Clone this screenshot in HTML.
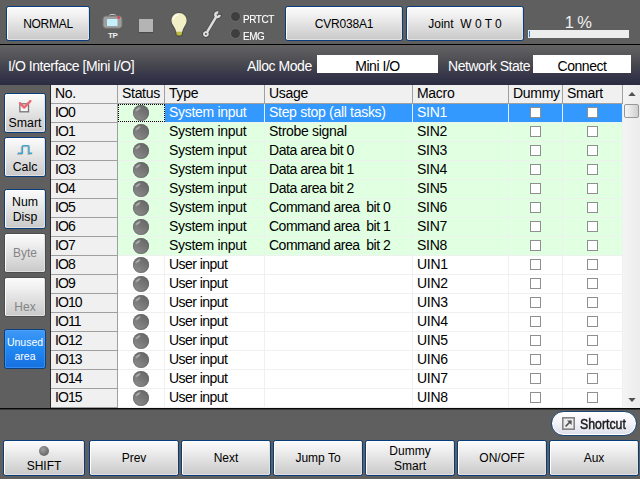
<!DOCTYPE html>
<html><head><meta charset="utf-8"><title>I/O Interface</title>
<style>
*{box-sizing:border-box;margin:0;padding:0}
html,body{width:640px;height:479px;overflow:hidden;background:#5f5f5f;font-family:"Liberation Sans",sans-serif;font-size:14px;letter-spacing:-0.3px;color:#000}
.abs{position:absolute}
.btn{position:absolute;border:1px solid #083d7c;border-radius:2.5px;background:linear-gradient(#fbfbfb 0%,#efefef 28%,#dedede 60%,#c9c9c9 100%);box-shadow:inset 1px 1px 0 0 #fff,inset -1px -1px 0 0 #e2e0de;text-align:center;color:#000;font-size:12px;letter-spacing:0;white-space:pre}
.top{top:6px;height:35px;line-height:34px}
.bot{top:440px;height:36px;width:90px;line-height:34px;font-size:12px}
.side{left:4px;width:42px;height:40px;font-size:12.3px}
.dis{color:#858585;border-color:#4c4c4c}
#band{position:absolute;left:0;top:45px;width:640px;height:40px;background:linear-gradient(#636364 0%,#58585b 22%,#47474f 50%,#37374a 75%,#2b2b43 100%)}
.wt{position:absolute;color:#fff;font-size:14px;letter-spacing:-0.45px;white-space:pre;line-height:18px}
.box{position:absolute;background:#fff;top:55px;height:18px;text-align:center;font-size:14px;letter-spacing:-0.45px;line-height:22px}
#tbl{position:absolute;left:51px;top:85px;width:572px;height:323px;background:#fff;overflow:hidden}
.r{position:absolute;left:0;width:572px;height:19px}
.c{position:absolute;top:0;height:19px;line-height:17px;padding-left:4px;white-space:pre;overflow:hidden;border-right:1px solid #f0f0f0;border-bottom:1px solid #f0f0f0}
.hd .c{letter-spacing:-0.3px;background:#f0f0f0;border-right:1px solid #a0a0a0;border-bottom:1px solid #a0a0a0;height:19px}
.c0{left:0;width:67px;letter-spacing:-0.9px;background:#f0f0f0;border-right:1px solid #a0a0a0;border-bottom:1px solid #a0a0a0}
.c1{left:67px;width:47px}
.c2{left:114px;width:100px}
.c3{left:214px;width:148px}
.c4{left:362px;width:96px}
.c5{left:458px;width:54px}
.c6{left:512px;width:60px}
.sys .c1,.sys .c2,.sys .c3,.sys .c4,.sys .c5,.sys .c6,.sel .c1{background:#e1ffe1;border-color:#eef2ee}
.sel .c2,.sel .c3,.sel .c4,.sel .c5,.sel .c6{background:#3399ff;color:#fff;border-right-color:#e4f0fc;border-bottom-color:#eef2ee}
.sel .c1{border:1px dotted #000;height:18px;line-height:15px;box-shadow:0 1px 0 #eef2ee}
.sel .c1 .led{left:14px;top:0}
.led{position:absolute;left:15px;top:1px;width:16px;height:15.5px;border-radius:50%;background:linear-gradient(215deg,#646464 0%,#737373 40%,#858585 75%,#949494 100%);box-shadow:inset 0 0 0 1px rgba(100,100,100,.55)}
.led::after{content:"";position:absolute;left:2.4px;top:3.2px;width:6.4px;height:2.4px;border-radius:50%;background:rgba(255,255,255,.42);transform:rotate(-38deg);filter:blur(.4px)}
.cb{position:absolute;top:3px;width:11px;height:11px;background:#fff;border:1px solid #8e8f8f}
.c5 .cb{left:21px}
.c6 .cb{left:24px}
#sb{position:absolute;left:623px;top:85px;width:17px;height:323px;background:linear-gradient(90deg,#f4f4f4,#ececec)}
#thumb{position:absolute;left:1px;top:19px;width:15px;height:14px;border:1px solid #979797;border-radius:2px;background:linear-gradient(90deg,#f6f6f6,#e4e4e4 50%,#cfcfcf)}
</style></head><body>
<!-- top bar -->
<div class="btn top" style="left:6px;width:84px;letter-spacing:-0.3px">NORMAL</div>
<svg class="abs" style="left:98px;top:10px" width="30" height="30" viewBox="0 0 30 30">
 <rect x="11.5" y="4.5" width="6" height="3" rx="1" fill="none" stroke="#c8c8c8" stroke-width="1"/>
 <rect x="5" y="6.4" width="19" height="12.6" rx="3" fill="#4e4e4e" opacity=".7"/>
 <rect x="5" y="6" width="19" height="12.3" rx="3" fill="#9e9e9e" stroke="#747474" stroke-width="1"/>
 <rect x="9" y="9" width="10.5" height="7" fill="#c6f0fa"/>
 <circle cx="20.7" cy="7.6" r="1.4" fill="#e8404a"/>
</svg>
<div class="wt" style="left:108px;top:30.5px;font-size:8px;line-height:10px;font-weight:bold;color:#f0f0f0">TP</div>
<div class="abs" style="left:139px;top:19px;width:14px;height:13px;background:#b4b4b4;box-shadow:0 1px 1px rgba(60,60,60,.6)"></div>
<svg class="abs" style="left:164px;top:6px" width="32" height="36" viewBox="164 6 32 36">
 <path d="M179,13.1 C174.6,13.1 171.5,16.5 171.5,20.6 C171.5,25 175.6,27.4 176.1,31.8 L176.4,34.6 Q179.2,37.2 182,34.6 L182.3,31.8 C182.8,27.4 186.6,25 186.6,20.6 C186.6,16.5 183.4,13.1 179,13.1 Z" fill="none" stroke="#444" stroke-width="1.6" opacity=".75"/>
 <path d="M176.3,31.2 L182.1,31.2 L181.9,34.6 Q179.2,37 176.5,34.6 Z" fill="#bdbb45"/>
 <path d="M176.6,34 Q179.2,36.6 181.8,34 L181.9,35 Q179.2,37.2 176.5,35 Z" fill="#7c7a2a"/>
 <path d="M179,13.1 C174.6,13.1 171.5,16.5 171.5,20.6 C171.5,25 175.6,27.4 176.1,31.8 L182.3,31.8 C182.8,27.4 186.6,25 186.6,20.6 C186.6,16.5 183.4,13.1 179,13.1 Z" fill="#f2efc6"/>
 <path d="M173.4,19.4 C173.8,16.8 175.6,15.2 178,14.9" stroke="#fff" stroke-width="1.1" fill="none" opacity=".9" stroke-linecap="round"/>
</svg>
<svg class="abs" style="left:196px;top:6px" width="32" height="36" viewBox="196 6 32 36">
 <g transform="translate(205.9,34) rotate(30.6)" fill="none" stroke-linecap="butt">
  <g stroke="#3e3e3e" opacity=".7">
   <path d="M0,-3 L0,-20" stroke-width="3.8"/>
   <circle r="2.1" stroke-width="3.2"/>
   <path d="M2.05,-24.2 A2.5,2.5 0 1 1 -1.0,-24.7" stroke-width="3.4" transform="rotate(0)"/>
  </g>
  <g stroke="#dedede">
   <path d="M0,-2.6 L0,-20.6" stroke-width="2.5"/>
   <circle r="1.95" stroke-width="1.9"/>
   <path d="M2.2,-23.4 A2.2,2.2 0 1 1 -0.4,-24.6" stroke-width="2.6"/>
  </g>
 </g>
</svg>
<div class="abs" style="left:231px;top:11.6px;width:9px;height:9px;border-radius:50%;background:#3e3e3e;box-shadow:0 0 0 .8px rgba(125,125,125,.45)"></div>
<div class="abs" style="left:231px;top:28.9px;width:9px;height:9px;border-radius:50%;background:#3e3e3e;box-shadow:0 0 0 .8px rgba(125,125,125,.45)"></div>
<div class="wt" style="left:243px;top:13px;font-size:11px;line-height:12px;color:#fff;transform:scaleX(.9);transform-origin:0 0;-webkit-text-stroke:.15px #fff">PRTCT</div>
<div class="wt" style="left:243px;top:30px;font-size:11px;line-height:12px;color:#fff;transform:scaleX(.9);transform-origin:0 0;-webkit-text-stroke:.15px #fff">EMG</div>
<div class="btn top" style="left:285px;width:118px;letter-spacing:-0.2px">CVR038A1</div>
<div class="btn top" style="left:406px;width:118px">Joint  W 0 T 0</div>
<div class="abs" style="left:528px;top:30px;width:101px;height:8px;background:#ededed"><div style="margin:1px 0 0 1px;width:1px;height:6px;background:#2f7fe0"></div></div>
<div class="wt" style="left:528px;width:100px;top:13px;text-align:center;font-size:16.5px;letter-spacing:-.6px;color:#f0f0f0">1 %</div>
<div class="abs" style="left:0;top:44px;width:640px;height:1px;background:#000;box-shadow:0 1px 0 rgba(0,0,0,.3)"></div>
<!-- band -->
<div id="band"></div>
<div class="wt" style="left:8px;top:57px">I/O Interface [Mini I/O]</div>
<div class="wt" style="left:247px;top:57px">Alloc Mode</div>
<div class="box" style="left:317px;width:121px">Mini I/O</div>
<div class="wt" style="left:448px;top:57px">Network State</div>
<div class="box" style="left:533px;width:98px">Connect</div>
<!-- table -->
<div class="abs" style="left:50px;top:85px;width:1px;height:323px;background:#2c2c2c"></div>
<div id="tbl">
<div class="r hd" style="top:0"><div class="c c0">No.</div><div class="c c1">Status</div><div class="c c2">Type</div><div class="c c3">Usage</div><div class="c c4">Macro</div><div class="c c5">Dummy</div><div class="c c6">Smart</div></div>
<div class="r sel" style="top:19px"><div class="c c0">IO0</div><div class="c c1"><i class="led"></i></div><div class="c c2">System input</div><div class="c c3">Step stop (all tasks)</div><div class="c c4">SIN1</div><div class="c c5"><i class="cb"></i></div><div class="c c6"><i class="cb"></i></div></div>
<div class="r sys" style="top:38px"><div class="c c0">IO1</div><div class="c c1"><i class="led"></i></div><div class="c c2">System input</div><div class="c c3">Strobe signal</div><div class="c c4">SIN2</div><div class="c c5"><i class="cb"></i></div><div class="c c6"><i class="cb"></i></div></div>
<div class="r sys" style="top:57px"><div class="c c0">IO2</div><div class="c c1"><i class="led"></i></div><div class="c c2">System input</div><div class="c c3" style="letter-spacing:-0.46px">Data area bit 0</div><div class="c c4">SIN3</div><div class="c c5"><i class="cb"></i></div><div class="c c6"><i class="cb"></i></div></div>
<div class="r sys" style="top:76px"><div class="c c0">IO3</div><div class="c c1"><i class="led"></i></div><div class="c c2">System input</div><div class="c c3" style="letter-spacing:-0.46px">Data area bit 1</div><div class="c c4">SIN4</div><div class="c c5"><i class="cb"></i></div><div class="c c6"><i class="cb"></i></div></div>
<div class="r sys" style="top:95px"><div class="c c0">IO4</div><div class="c c1"><i class="led"></i></div><div class="c c2">System input</div><div class="c c3" style="letter-spacing:-0.46px">Data area bit 2</div><div class="c c4">SIN5</div><div class="c c5"><i class="cb"></i></div><div class="c c6"><i class="cb"></i></div></div>
<div class="r sys" style="top:114px"><div class="c c0">IO5</div><div class="c c1"><i class="led"></i></div><div class="c c2">System input</div><div class="c c3" style="letter-spacing:-0.5px">Command area  bit 0</div><div class="c c4">SIN6</div><div class="c c5"><i class="cb"></i></div><div class="c c6"><i class="cb"></i></div></div>
<div class="r sys" style="top:133px"><div class="c c0">IO6</div><div class="c c1"><i class="led"></i></div><div class="c c2">System input</div><div class="c c3" style="letter-spacing:-0.5px">Command area  bit 1</div><div class="c c4">SIN7</div><div class="c c5"><i class="cb"></i></div><div class="c c6"><i class="cb"></i></div></div>
<div class="r sys" style="top:152px"><div class="c c0">IO7</div><div class="c c1"><i class="led"></i></div><div class="c c2">System input</div><div class="c c3" style="letter-spacing:-0.5px">Command area  bit 2</div><div class="c c4">SIN8</div><div class="c c5"><i class="cb"></i></div><div class="c c6"><i class="cb"></i></div></div>
<div class="r usr" style="top:171px"><div class="c c0">IO8</div><div class="c c1"><i class="led"></i></div><div class="c c2" style="letter-spacing:-0.55px">User input</div><div class="c c3"></div><div class="c c4">UIN1</div><div class="c c5"><i class="cb"></i></div><div class="c c6"><i class="cb"></i></div></div>
<div class="r usr" style="top:190px"><div class="c c0">IO9</div><div class="c c1"><i class="led"></i></div><div class="c c2" style="letter-spacing:-0.55px">User input</div><div class="c c3"></div><div class="c c4">UIN2</div><div class="c c5"><i class="cb"></i></div><div class="c c6"><i class="cb"></i></div></div>
<div class="r usr" style="top:209px"><div class="c c0">IO10</div><div class="c c1"><i class="led"></i></div><div class="c c2" style="letter-spacing:-0.55px">User input</div><div class="c c3"></div><div class="c c4">UIN3</div><div class="c c5"><i class="cb"></i></div><div class="c c6"><i class="cb"></i></div></div>
<div class="r usr" style="top:228px"><div class="c c0">IO11</div><div class="c c1"><i class="led"></i></div><div class="c c2" style="letter-spacing:-0.55px">User input</div><div class="c c3"></div><div class="c c4">UIN4</div><div class="c c5"><i class="cb"></i></div><div class="c c6"><i class="cb"></i></div></div>
<div class="r usr" style="top:247px"><div class="c c0">IO12</div><div class="c c1"><i class="led"></i></div><div class="c c2" style="letter-spacing:-0.55px">User input</div><div class="c c3"></div><div class="c c4">UIN5</div><div class="c c5"><i class="cb"></i></div><div class="c c6"><i class="cb"></i></div></div>
<div class="r usr" style="top:266px"><div class="c c0">IO13</div><div class="c c1"><i class="led"></i></div><div class="c c2" style="letter-spacing:-0.55px">User input</div><div class="c c3"></div><div class="c c4">UIN6</div><div class="c c5"><i class="cb"></i></div><div class="c c6"><i class="cb"></i></div></div>
<div class="r usr" style="top:285px"><div class="c c0">IO14</div><div class="c c1"><i class="led"></i></div><div class="c c2" style="letter-spacing:-0.55px">User input</div><div class="c c3"></div><div class="c c4">UIN7</div><div class="c c5"><i class="cb"></i></div><div class="c c6"><i class="cb"></i></div></div>
<div class="r usr" style="top:304px"><div class="c c0">IO15</div><div class="c c1"><i class="led"></i></div><div class="c c2" style="letter-spacing:-0.55px">User input</div><div class="c c3"></div><div class="c c4">UIN8</div><div class="c c5"><i class="cb"></i></div><div class="c c6"><i class="cb"></i></div></div>
</div>
<div id="sb"><div id="thumb"></div>
<svg class="abs" style="left:0;top:0" width="17" height="323"><path d="M5.3 11 L9 7 L12.7 11 Z" fill="#505050"/><path d="M5.3 313 L12.7 313 L9 317 Z" fill="#505050"/></svg>
</div>
<div class="abs" style="left:0;top:408px;width:640px;height:1px;background:#080808;box-shadow:0 1px 0 rgba(0,0,0,.4)"></div>
<!-- side buttons -->
<div class="btn side" style="top:93px;line-height:16px;padding-top:21px">Smart</div>
<svg class="abs" style="left:16px;top:98px" width="18" height="16" viewBox="0 0 18 16">
 <rect x="3.9" y="5.8" width="8.6" height="8" fill="#f6f6f6" stroke="#747474" stroke-width="1.3"/>
 <path d="M4 5.2 L8.2 9.6 L14.4 3" stroke="#ee6670" stroke-width="2.4" fill="none" stroke-linecap="round" stroke-linejoin="round"/>
</svg>
<div class="btn side" style="top:137px;line-height:16px;padding-top:21px">Calc</div>
<svg class="abs" style="left:16px;top:142px" width="18" height="14" viewBox="0 0 18 14">
 <path d="M1.8,11.2 H6.4 V4.4 Q6.4,3.6 7.2,3.6 H12.2 Q13,3.6 13,4.4 V11.2 H16.2" stroke="#bcbcbc" stroke-width="1.5" fill="none" transform="translate(-.9,1)"/>
 <path d="M1.8,11.2 H6.4 V4.4 Q6.4,3.6 7.2,3.6 H12.2 Q13,3.6 13,4.4 V11.2 H16.2" stroke="#3fa2c9" stroke-width="1.45" fill="none"/>
</svg>
<div class="btn side" style="top:189px;line-height:15px;padding-top:5px">Num
Disp</div>
<div class="btn side dis" style="top:233px;line-height:39px;font-size:12px">Byte</div>
<div class="btn side dis" style="top:277px;line-height:16px;padding-top:21px;font-size:12px">Hex</div>
<div class="btn side" style="top:329px;line-height:14px;padding-top:5px;font-size:10.5px;color:#fff;background:linear-gradient(#3f98f6,#2187f1 50%,#1670e0);box-shadow:inset 0 0 0 1px rgba(90,170,255,.45);border-color:#0a3f80">Unused
area</div>
<!-- bottom -->
<div class="btn bot" style="left:3px;width:82px;line-height:16px;padding-top:17px">SHIFT</div>
<div class="abs" style="left:39px;top:446px;width:10px;height:10px;border-radius:50%;background:radial-gradient(circle at 40% 35%,#a0a0a0,#707070 60%,#6a6a6a)"></div>
<div class="btn bot" style="left:89px">Prev</div>
<div class="btn bot" style="left:181px">Next</div>
<div class="btn bot" style="left:273px">Jump To</div>
<div class="btn bot" style="left:365px;line-height:15px;padding-top:3px">Dummy
Smart</div>
<div class="btn bot" style="left:457px">ON/OFF</div>
<div class="btn bot" style="left:549px">Aux</div>
<div class="abs" style="left:551px;top:411px;width:86px;height:25px;border-radius:12.5px;border:1px solid #1d4678;background:linear-gradient(#fff 0%,#f4f4fa 45%,#dedeec 100%);box-shadow:inset 0 0 0 1px #fff"></div>
<svg class="abs" style="left:561px;top:416px" width="15" height="15" viewBox="0 0 15 15">
 <rect x="1.8" y="1.8" width="11.4" height="11.4" fill="#ececec" stroke="#848484" stroke-width="1.6"/>
 <path d="M4.6 10.4 L10 5" stroke="#505050" stroke-width="1.5"/><path d="M6 4.4 L10.6 4.4 L10.6 9 Z" fill="#505050"/>
</svg>
<div class="abs" style="left:580px;top:415px;font-size:14.5px;line-height:18px;letter-spacing:0;-webkit-text-stroke:.45px #1a1a1a;white-space:pre;transform:scaleX(.85);transform-origin:0 0;color:#1a1a1a">Shortcut</div>
</body></html>
